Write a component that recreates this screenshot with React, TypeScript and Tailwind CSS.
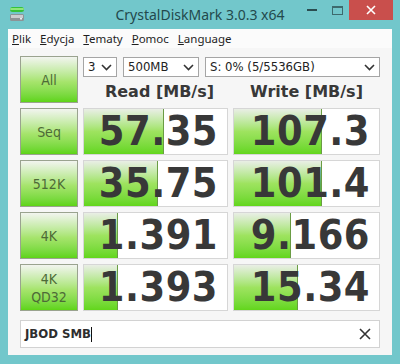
import React from "react";

const rows = [
  { label: ["Seq"], read: "57.35", rw: 80, write: "107.3", ww: 88 },
  { label: ["512K"], read: "35.75", rw: 74, write: "101.4", ww: 88 },
  { label: ["4K"], read: "1.391", rw: 34, write: "9.166", ww: 57 },
  { label: ["4K", "QD32"], read: "1.393", rw: 34, write: "15.34", ww: 64 },
];

const tahoma = { fontFamily: '"DejaVu Sans Condensed", "DejaVu Sans", sans-serif' };
const verdana = { fontFamily: '"DejaVu Sans", sans-serif' };
const segoe = { fontFamily: '"Noto Sans", "Open Sans", sans-serif' };

function GreenButton({ lines }: { lines: string[] }) {
  return (
    <div
      className="h-full flex flex-col items-center justify-center border border-[#9aa38f] bg-gradient-to-b from-[#f2f4ef] via-[#a6e46c] via-55% to-[#5ed414] text-[14px] leading-[18px] text-[#4d6a37]"
      style={tahoma}
    >
      {lines.map((l) => (
        <span key={l}>{l}</span>
      ))}
    </div>
  );
}

function Cell({ value, bar }: { value: string; bar: number }) {
  return (
    <div className="relative h-full border border-[#d6d6d6] bg-white flex items-center justify-end pr-[9px] overflow-hidden">
      <div
        className="absolute left-0 top-0 bottom-0 border-r border-[#6a9c44] bg-gradient-to-b from-[#e9eee5] via-[#9ee35f] via-50% to-[#62d61a]"
        style={{ width: bar }}
      />
      <span className="relative font-bold text-[41px] leading-none text-[#383838] tracking-[0.5px]" style={tahoma}>
        {value}
      </span>
    </div>
  );
}

function Select({ value, w }: { value: string; w: string }) {
  return (
    <div
      className={`${w} h-[20px] border border-[#a5a5a5] bg-white flex items-center justify-between pl-[4px] pr-[4px] text-[13px] text-[#222]`}
      style={tahoma}
    >
      <span>{value}</span>
      <svg width="11" height="7" viewBox="0 0 11 7">
        <path d="M1 1 L5.5 5.5 L10 1" fill="none" stroke="#333" strokeWidth="1.6" />
      </svg>
    </div>
  );
}

export default function App() {
  return (
    <div className="w-[400px] h-[364px] bg-[#72c7cb] flex flex-col overflow-hidden">
      {/* title bar */}
      <div className="h-[29px] grid grid-cols-[1fr_auto_1fr] items-start">
        <div className="pl-[9px] pt-[6px]">
          <svg width="16" height="16" viewBox="0 0 16 16">
            <rect x="1" y="1" width="14" height="5" rx="2.5" fill="#36c23a" />
            <rect x="1" y="2" width="14" height="2" rx="1" fill="#8fe67a" />
            <rect x="1" y="8" width="14" height="7" rx="1.5" fill="#8d9396" />
            <rect x="2" y="9" width="12" height="3" fill="#c9cdcf" />
            <rect x="11" y="12" width="2" height="1.5" fill="#e9ecee" />
          </svg>
        </div>
        <div className="pt-[5px] text-[14px] leading-[20px] text-[#23494c]" style={segoe}>
          CrystalDiskMark 3.0.3 x64
        </div>
        <div className="flex justify-end items-start">
          <div className="w-[24px] h-[20px] flex items-center justify-center mr-[5px]">
            <div className="w-[10px] h-[2px] bg-[#2a4d50]" />
          </div>
          <div className="w-[16px] h-[20px] flex items-start justify-center pt-[6px] mr-[4px]">
            <div className="w-[11px] h-[9px] border border-[#3d6a6d] border-t-2" />
          </div>
          <div className="w-[44px] h-[20px] bg-[#c94f4c] flex items-center justify-center mr-[7px]">
            <svg width="10" height="10" viewBox="0 0 10 10">
              <path d="M1 1 L9 9 M9 1 L1 9" stroke="#fff" strokeWidth="1.6" />
            </svg>
          </div>
        </div>
      </div>

      {/* window body */}
      <div className="flex-1 mx-[8px] mb-[9px] bg-[#f6f6f6] flex flex-col">
        <div className="h-[19px] bg-[#fbfbfb] flex items-center gap-[9px] pl-[4px] text-[11.5px] text-[#1e1e1e]" style={segoe}>
          <span><u>P</u>lik</span>
          <span><u>E</u>dycja</span>
          <span><u>T</u>ematy</span>
          <span><u>P</u>omoc</span>
          <span><u>L</u>anguage</span>
        </div>

        <div className="pl-[12px] pt-[8px] flex flex-col">
          <div className="grid grid-cols-[58px_145px_147px] grid-rows-[47px_47px_47px_47px_47px] gap-x-[5px] gap-y-[5px]">
            <GreenButton lines={["All"]} />
            <div className="col-span-2 flex flex-col">
              <div className="flex gap-[6px] pt-[1px]">
                <Select value="3" w="w-[34px]" />
                <Select value="500MB" w="w-[76px]" />
                <Select value="S: 0% (5/5536GB)" w="w-[175px]" />
              </div>
              <div className="grid grid-cols-[145px_147px] gap-x-[5px] mt-[4px] text-[16px] leading-[22px] font-bold text-[#383838]" style={verdana}>
                <div className="text-center pl-[8px]">Read [MB/s]</div>
                <div className="text-center">Write [MB/s]</div>
              </div>
            </div>
            {rows.map((r) => (
              <React.Fragment key={r.read}>
                <GreenButton lines={r.label} />
                <Cell value={r.read} bar={r.rw} />
                <Cell value={r.write} bar={r.ww} />
              </React.Fragment>
            ))}
          </div>

          <div className="mt-[9px] w-[360px] h-[28px] border border-[#d2d2d2] bg-white flex items-center justify-between pl-[4px] pr-[8px]">
            <div className="flex items-center">
              <span className="font-bold text-[13px] text-[#2e2e2e]" style={tahoma}>JBOD SMB</span>
              <span className="w-[1px] h-[15px] bg-[#111]" />
            </div>
            <svg width="12" height="12" viewBox="0 0 12 12">
              <path d="M1 1 L11 11 M11 1 L1 11" stroke="#333" strokeWidth="1.6" />
            </svg>
          </div>
        </div>
      </div>
    </div>
  );
}
